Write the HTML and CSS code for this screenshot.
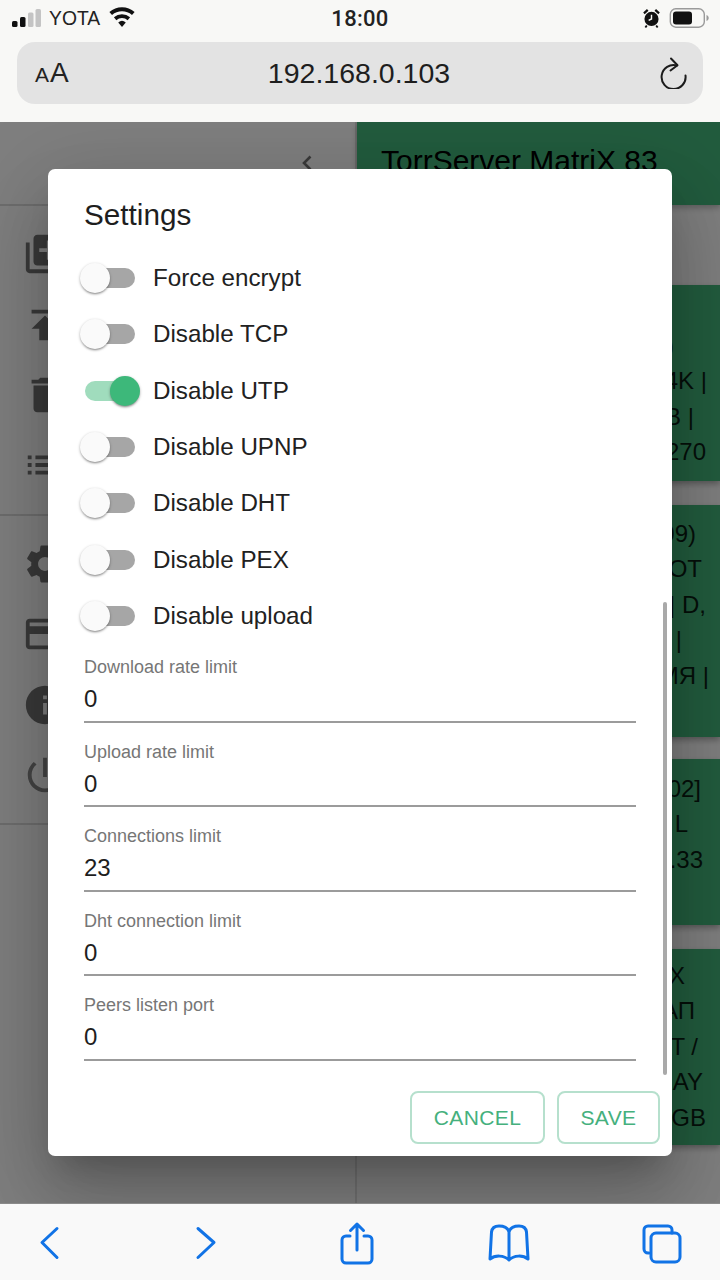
FILE: index.html
```html
<!DOCTYPE html>
<html lang="en">
<head>
<meta charset="utf-8">
<title>Settings</title>
<link rel="stylesheet" href="styles.css">
</head>
<body>
<div class="phone">
  <header class="browser-top">
    <div class="status">
      <div class="status-left">
        <svg class="signal" viewBox="0 0 29 18"><rect x="0" y="12" width="5.500" height="6" rx="1.500" fill="#111"/><rect x="8" y="8" width="5.500" height="10" rx="1.500" fill="#111"/><rect x="16" y="3.500" width="5.500" height="14.500" rx="1.500" fill="#c4c4c4"/><rect x="23.500" y="0" width="5.500" height="18" rx="1.500" fill="#c4c4c4"/></svg>
        <span class="carrier">YOTA</span>
        <svg class="wifi" viewBox="0 0 26 20"><path d="M13 20l-3.600-4.300a5.500 5.500 0 0 1 7.200 0z" fill="#111"/><path d="M7.600 13.500l-2.300-2.700a11.800 11.800 0 0 1 15.400 0l-2.300 2.700a8.200 8.200 0 0 0-10.800 0z" fill="#111"/><path d="M3.500 8.600L1 5.800a18 18 0 0 1 24 0l-2.500 2.800a14.400 14.400 0 0 0-19 0z" fill="#111"/></svg>
      </div>
      <span class="time">18:00</span>
      <div class="status-right">
        <svg class="alarm" viewBox="0 0 18 20"><circle cx="9" cy="11" r="7.500" fill="#111"/><path d="M9 6.500V11l-3 1.500" fill="none" stroke="#f8f8f6" stroke-width="1.500"/><path d="M1 5l4-3.500M17 5l-4-3.500" stroke="#111" stroke-width="2.400"/><path d="M4 18l-1.500 2M14 18l1.500 2" stroke="#111" stroke-width="2"/></svg>
        <svg class="battery" viewBox="0 0 40 20"><rect x="0.800" y="0.800" width="34" height="18.400" rx="5.500" fill="none" stroke="#9a9a9a" stroke-width="1.400"/><rect x="3.500" y="3.500" width="19" height="13" rx="3" fill="#111"/><path d="M37 7v6c1.400-.5 2.200-1.600 2.200-3s-.8-2.500-2.200-3z" fill="#9a9a9a"/></svg>
      </div>
    </div>
    <div class="urlbar">
      <span class="aa"><span class="aa-small">A</span>A</span>
      <span class="url">192.168.0.103</span>
      <svg class="reload" viewBox="0 0 28 32"><path d="M17 8.500A12 12 0 1 0 25.500 18.500" fill="none" stroke="#1c1c1c" stroke-width="2" stroke-linecap="round"/><path d="M11 1.500l6.500 6.700-7 5.300" fill="none" stroke="#1c1c1c" stroke-width="2" stroke-linecap="round" stroke-linejoin="round"/></svg>
    </div>
  </header>

  <main class="app">
    <div class="page">
      <aside class="drawer">
        <div class="drawer-head">
          <svg class="chevron" viewBox="0 0 14 20"><path d="M10.500 3.500L4 10l6.500 6.500" fill="none" stroke="#757575" stroke-width="2.600"/></svg>
        </div>
        <ul class="menu">
          <li><svg class="mi" viewBox="0 0 24 24"><path d="M4 6H2v14c0 1.100.9 2 2 2h14v-2H4V6zm16-4H8c-1.100 0-2 .9-2 2v12c0 1.100.9 2 2 2h12c1.100 0 2-.9 2-2V4c0-1.100-.9-2-2-2zm-1 9h-4v4h-2v-4H9V9h4V5h2v4h4v2z"/></svg></li>
          <li><svg class="mi" viewBox="0 0 24 24"><path d="M5 4v2h14V4H5zm0 10h4v6h6v-6h4l-7-7-7 7z"/></svg></li>
          <li><svg class="mi" viewBox="0 0 24 24"><path d="M6 19c0 1.100.9 2 2 2h8c1.100 0 2-.9 2-2V7H6v12zM19 4h-3.500l-1-1h-5l-1 1H5v2h14V4z"/></svg></li>
          <li><svg class="mi" viewBox="0 0 24 24"><path d="M3 13h2v-2H3v2zm0 4h2v-2H3v2zm0-8h2V7H3v2zm4 4h14v-2H7v2zm0 4h14v-2H7v2zM7 7v2h14V7H7z"/></svg></li>
        </ul>
        <ul class="menu">
          <li><svg class="mi" viewBox="0 0 24 24"><path d="M19.140 12.940c.04-.3.06-.61.06-.94 0-.32-.02-.64-.07-.94l2.030-1.580c.18-.14.23-.41.12-.61l-1.920-3.320c-.12-.22-.37-.29-.59-.22l-2.390.96c-.5-.38-1.030-.7-1.620-.94l-.36-2.540c-.04-.24-.24-.41-.48-.41h-3.840c-.24 0-.43.17-.47.41l-.36 2.540c-.59.24-1.130.57-1.620.94l-2.390-.96c-.22-.08-.47 0-.59.22L2.740 8.870c-.12.21-.08.47.12.61l2.030 1.580c-.05.3-.09.63-.09.94s.02.64.07.94l-2.030 1.580c-.18.14-.23.41-.12.61l1.920 3.320c.12.22.37.29.59.22l2.390-.96c.5.38 1.030.7 1.620.94l.36 2.540c.05.24.24.41.48.41h3.840c.24 0 .44-.17.47-.41l.36-2.540c.59-.24 1.130-.56 1.620-.94l2.390.96c.22.08.47 0 .59-.22l1.920-3.320c.12-.22.07-.47-.12-.61l-2.010-1.580zM12 15.600c-1.980 0-3.600-1.620-3.600-3.600s1.620-3.600 3.600-3.600 3.600 1.620 3.600 3.600-1.620 3.600-3.600 3.600z"/></svg></li>
          <li><svg class="mi" viewBox="0 0 24 24"><path d="M20 4H4c-1.110 0-1.990.89-1.990 2L2 18c0 1.110.89 2 2 2h16c1.110 0 2-.89 2-2V6c0-1.110-.89-2-2-2zm0 14H4v-6h16v6zm0-10H4V6h16v2z"/></svg></li>
          <li><svg class="mi" viewBox="0 0 24 24"><path d="M12 2C6.480 2 2 6.480 2 12s4.480 10 10 10 10-4.480 10-10S17.520 2 12 2zm1 15h-2v-6h2v6zm0-8h-2V7h2v2z"/></svg></li>
          <li><svg class="mi mi-light" viewBox="0 0 24 24"><path d="M13 3h-2v10h2V3zm4.830 2.170l-1.420 1.420C17.990 7.860 19 9.810 19 12c0 3.870-3.130 7-7 7s-7-3.130-7-7c0-2.190 1.010-4.140 2.580-5.420L6.170 5.170C4.230 6.820 3 9.260 3 12c0 4.970 4.030 9 9 9s9-4.030 9-9c0-2.740-1.230-5.180-3.170-6.830z"/></svg></li>
        </ul>
      </aside>
      <section class="content">
        <div class="appbar">TorrServer MatriX 83</div>
        <div class="cards">
          <article class="card c1">
            <p class="r46">0)</p><p class="r13">4K |</p><p class="r26">B |</p><p class="r14">270</p>
          </article>
          <article class="card c2">
            <p class="r24">09)</p><p class="r18">OT</p><p class="r14">| D,</p><p class="r38">|</p><p class="r11">МЯ |</p>
          </article>
          <article class="card c3">
            <p class="r19">02]</p><p class="r32">L</p><p class="r17">.33</p>
          </article>
          <article class="card c4">
            <p class="r35">X</p><p class="r25">АП</p><p class="r22">T /</p><p class="r17">RAY</p><p class="r14">GB</p>
          </article>
        </div>
      </section>
    </div>
    <div class="backdrop"></div>

    <div class="dialog">
      <h2 class="dialog-title">Settings</h2>
      <div class="dialog-body">
        <label class="switch-row"><span class="switch"><span class="track"></span><span class="thumb"></span></span>Force encrypt</label>
        <label class="switch-row"><span class="switch"><span class="track"></span><span class="thumb"></span></span>Disable TCP</label>
        <label class="switch-row"><span class="switch on"><span class="track"></span><span class="thumb"></span></span>Disable UTP</label>
        <label class="switch-row"><span class="switch"><span class="track"></span><span class="thumb"></span></span>Disable UPNP</label>
        <label class="switch-row"><span class="switch"><span class="track"></span><span class="thumb"></span></span>Disable DHT</label>
        <label class="switch-row"><span class="switch"><span class="track"></span><span class="thumb"></span></span>Disable PEX</label>
        <label class="switch-row"><span class="switch"><span class="track"></span><span class="thumb"></span></span>Disable upload</label>
        <div class="fields">
          <div class="field"><span class="field-label">Download rate limit</span><span class="field-value">0</span></div>
          <div class="field"><span class="field-label">Upload rate limit</span><span class="field-value">0</span></div>
          <div class="field"><span class="field-label">Connections limit</span><span class="field-value">23</span></div>
          <div class="field"><span class="field-label">Dht connection limit</span><span class="field-value">0</span></div>
          <div class="field"><span class="field-label">Peers listen port</span><span class="field-value">0</span></div>
        </div>
      </div>
      <div class="dialog-actions">
        <button class="btn btn-cancel">CANCEL</button>
        <button class="btn btn-save">SAVE</button>
      </div>
      <div class="scrollbar"></div>
    </div>
  </main>

  <footer class="toolbar">
    <svg class="tb tb-back" viewBox="0 0 24 40"><path d="M19 4.500L4 18.500l15 15" fill="none" stroke="#1173e6" stroke-width="3" stroke-linecap="round" stroke-linejoin="round"/></svg>
    <svg class="tb tb-fwd" viewBox="0 0 24 40"><path d="M4 4.500l16 14-16 15" fill="none" stroke="#1173e6" stroke-width="3" stroke-linecap="round" stroke-linejoin="round"/></svg>
    <svg class="tb tb-share" viewBox="0 0 36 46"><path d="M11 16H7a4 4 0 0 0-4 4v19a4 4 0 0 0 4 4h22a4 4 0 0 0 4-4V20a4 4 0 0 0-4-4h-4" fill="none" stroke="#1173e6" stroke-width="3" stroke-linecap="round"/><path d="M18 30V4M11.500 10.500L18 4l6.500 6.500" fill="none" stroke="#1173e6" stroke-width="3" stroke-linecap="round" stroke-linejoin="round"/></svg>
    <svg class="tb tb-book" viewBox="0 0 42 38"><path d="M21 8C20 4 16 2 11 2 6 2 4 4 3.500 8L2 35C7 31 16 31 21 36 26 31 35 31 40 35L38.500 8C38 4 36 2 31 2 26 2 22 4 21 8zM21 8v28" fill="none" stroke="#1173e6" stroke-width="3" stroke-linejoin="round"/></svg>
    <svg class="tb tb-tabs" viewBox="0 0 40 40"><path d="M7 29H6a4 4 0 0 1-4-4V6a4 4 0 0 1 4-4h20a4 4 0 0 1 4 4v3" fill="none" stroke="#1173e6" stroke-width="3" stroke-linecap="round"/><rect x="9" y="9" width="29" height="29" rx="5" fill="none" stroke="#1173e6" stroke-width="3"/></svg>
  </footer>
</div>
</body>
</html>
```
FILE: styles.css
```css
* { box-sizing: border-box; }
html, body { margin: 0; padding: 0; }
body { font-family: "Liberation Sans", Arial, sans-serif; background: #fff; color: #1c1c1c; }
.phone { width: 720px; height: 1280px; display: flex; flex-direction: column; overflow: hidden; }

/* Browser chrome */
.browser-top { height: 122px; flex: none; background: #f8f8f6; padding: 0 17px; }
.status { height: 42px; display: grid; grid-template-columns: 1fr auto 1fr; align-items: center; padding-bottom: 6px; margin: 0 -5px; }
.status-left { display: flex; align-items: center; }
.signal { width: 29px; height: 18px; margin-right: 8px; }
.carrier { font-size: 21px; margin-right: 11px; transform: scaleX(.92); transform-origin: left; width: 48px; color: #222; }
.wifi { width: 28px; height: 21px; margin-top: -4px; }
.time { font-family: Roboto, "Liberation Sans", sans-serif; font-size: 22px; font-weight: 500; color: #222; letter-spacing: .3px; }
.status-right { display: flex; justify-content: flex-end; align-items: center; gap: 9px; margin-right: -2px; }
.alarm { width: 17px; height: 20px; }
.battery { width: 41px; height: 20px; }
.urlbar { height: 62px; border-radius: 18px; background: #e3e3e3; display: grid; grid-template-columns: 1fr auto 1fr; align-items: center; padding: 0 20px 0 18px; }
.aa { font-size: 28px; color: #222; line-height: 1; }
.aa-small { font-size: 21px; margin-right: 1px; }
.url { font-size: 28.500px; color: #1e1e1e; }
.reload { width: 28px; height: 32px; justify-self: end; margin-right: -5px; }

/* App behind dialog */
.app { flex: 1; position: relative; overflow: hidden; }
.page { height: 100%; display: grid; grid-template-columns: 357px 1fr; background: #fff; }
.drawer { border-right: 2px solid #e2e2e2; }
.drawer-head { height: 84px; border-bottom: 2px solid #dcdcdc; display: flex; align-items: center; justify-content: flex-end; padding: 0 41px 0 0; }
.chevron { width: 14px; height: 20px; }
.menu { list-style: none; margin: 0; padding: 13px 0; border-bottom: 2px solid #dcdcdc; }
.menu li { height: 70.400px; display: flex; align-items: center; padding-left: 22px; }
.mi { width: 46px; height: 46px; fill: #757575; }
.mi-light { fill: #8a8a8a; }
.content { min-width: 0; }
.appbar { height: 83px; background: #45b87d; color: #000; font-size: 30px; padding: 22px 0 0 24px; box-shadow: 0 3px 6px rgba(0,0,0,.25); white-space: nowrap; }
.cards { display: flex; flex-direction: column; }
.card { background: #45b87d; color: #0c1f15; font-size: 24px; box-shadow: 0 3px 6px rgba(0,0,0,.3); padding-left: 4px; }
.card p { margin: 0; line-height: 35.400px; height: 35.400px; text-align: right; white-space: nowrap; }
.c1 { margin-top: 80px; height: 196px; padding-top: 43px; }
.c2 { margin-top: 24px; height: 232px; padding-top: 11px; }
.c3 { margin-top: 22px; height: 166px; padding-top: 12px; }
.c4 { margin-top: 24px; height: 196px; padding-top: 9px; }
.r11 { padding-right: 11px; } .r13 { padding-right: 13px; } .r14 { padding-right: 14px; }
.r17 { padding-right: 17px; } .r18 { padding-right: 18px; } .r19 { padding-right: 19px; }
.r22 { padding-right: 22px; } .r24 { padding-right: 24px; } .r25 { padding-right: 25px; }
.r26 { padding-right: 26px; } .r32 { padding-right: 32px; } .r35 { padding-right: 35px; }
.r38 { padding-right: 38px; } .r46 { padding-right: 46px; }
.backdrop { position: absolute; inset: 0; background: rgba(0,0,0,.5); }

/* Dialog */
.dialog { position: absolute; left: 48px; top: 47px; width: 624px; height: 987px; background: #fff; border-radius: 7px; display: flex; flex-direction: column; box-shadow: 0 21px 29px -13px rgba(0,0,0,.2), 0 46px 73px 6px rgba(0,0,0,.14), 0 17px 88px 15px rgba(0,0,0,.12); }
.dialog-title { margin: 0; font-size: 29.700px; font-weight: 400; color: #1e1e1e; line-height: 34px; padding: 29px 36px 0; }
.dialog-body { flex: 1; padding: 18px 36px 0; min-height: 0; }
.switch-row { display: flex; align-items: center; height: 56.300px; font-size: 24.200px; color: #212121; }
.switch { position: relative; width: 72px; height: 30px; flex: none; margin-right: 1px; margin-left: -4px; }
.track { position: absolute; left: 5px; top: 5px; width: 50px; height: 20px; border-radius: 10px; background: #a6a6a6; }
.thumb { position: absolute; left: 0; top: 0; width: 30px; height: 30px; border-radius: 50%; background: #fafafa; box-shadow: 0 2px 2px -1px rgba(0,0,0,.25), 0 1px 3px rgba(0,0,0,.3); }
.switch.on .track { background: #a0dcbd; }
.switch.on .thumb { left: 30px; background: #3db87a; }
.fields { display: flex; flex-direction: column; margin-top: 9px; }
.field { height: 84.500px; display: flex; flex-direction: column; padding-top: 3px; }
.field-label { font-size: 18px; line-height: 22px; color: #767676; }
.field-value { font-size: 24px; line-height: 32px; color: #1e1e1e; border-bottom: 2px solid #9b9b9b; height: 44.500px; padding-top: 5px; flex: none; }
.dialog-actions { display: flex; justify-content: flex-end; gap: 12px; padding: 0 12px 12px; }
.btn { height: 53px; background: #fff; border: 2px solid #b6e0cd; border-radius: 8px; color: #45b07d; font: 400 21px "Liberation Sans", Arial, sans-serif; letter-spacing: .4px; padding: 0; }
.btn-cancel { width: 135px; }
.btn-save { width: 103px; }
.scrollbar { position: absolute; left: 615px; top: 433px; width: 4px; height: 473px; border-radius: 2px; background: #a9a9a9; }

/* Toolbar */
.toolbar { height: 77px; flex: none; background: #f9f9f9; border-top: 1px solid #8a8a8a; position: relative; }
.tb { position: absolute; }
.tb-back { left: 38px; top: 20px; width: 24px; height: 40px; }
.tb-fwd { left: 194px; top: 20px; width: 24px; height: 40px; }
.tb-share { left: 339px; top: 16px; width: 36px; height: 46px; }
.tb-book { left: 488px; top: 20px; width: 42px; height: 38px; }
.tb-tabs { left: 642px; top: 20px; width: 40px; height: 40px; }
```
